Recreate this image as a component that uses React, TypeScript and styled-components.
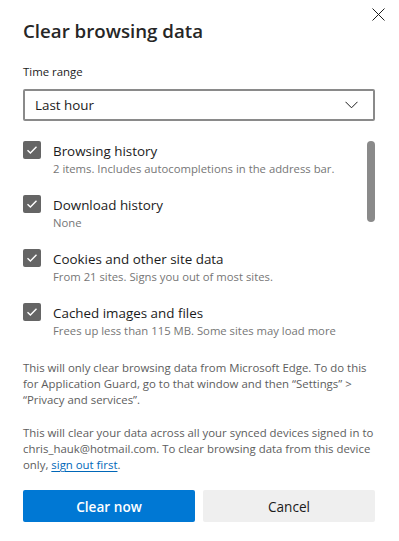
import { Fragment } from "react"
import styled, { createGlobalStyle } from "styled-components"

const GlobalStyle = createGlobalStyle`
    html, body {
        margin: 0;
        padding: 0;
        background: #ffffff;
    }

    body {
        font-family: "Open Sans", "Noto Sans", sans-serif;
        color: #1b1b1b;
    }
`

const Dialog = styled('div')`
    position: relative;
    width: 399px;
    height: 541px;
    box-sizing: border-box;
    padding: 17px 24px 0 23px;
    display: flex;
    flex-direction: column;
    background: #ffffff;
`

const CloseButton = styled('button')`
    position: absolute;
    top: 6px;
    right: 13px;
    width: 16px;
    height: 16px;
    padding: 0;
    border: none;
    background: transparent;
    display: flex;
    align-items: center;
    justify-content: center;
`

const Title = styled('h1')`
    margin: 0;
    font-size: 18.7px;
    line-height: 28px;
    font-weight: 600;
    color: #262626;
`

const FieldLabel = styled('label')`
    margin-top: 19px;
    font-size: 11.4px;
    line-height: 16px;
    color: #1b1b1b;
`

const Select = styled('div')`
    margin-top: 9px;
    height: 32px;
    box-sizing: border-box;
    border: 2px solid #8a8a8a;
    border-radius: 2px;
    display: flex;
    align-items: center;
    justify-content: space-between;
    padding: 0 15px 0 10px;
    font-size: 13.4px;
    color: #1b1b1b;
`

const ListArea = styled('div')`
    display: flex;
    margin-top: 10px;
    height: 213px;
    overflow: hidden;
`

const Items = styled('div')`
    flex: 1;
    display: flex;
    flex-direction: column;
    gap: 18px;
    padding-top: 10px;
`

const Track = styled('div')`
    width: 8px;
    padding-top: 10px;
`

const Thumb = styled('div')`
    width: 8px;
    height: 81px;
    border-radius: 4px;
    background: #8a8a8a;
`

const Item = styled('div')`
    display: flex;
    align-items: flex-start;
    gap: 12px;
`

const Box = styled('span')`
    flex: none;
    width: 18px;
    height: 18px;
    border-radius: 2px;
    background: #656565;
    display: flex;
    align-items: center;
    justify-content: center;
`

const ItemText = styled('div')`
    display: flex;
    flex-direction: column;
`

const ItemLabel = styled('span')`
    font-size: 13.4px;
    line-height: 20px;
    color: #1b1b1b;
`

const ItemNote = styled('span')`
    font-size: 11.3px;
    line-height: 16px;
    color: #767676;
    white-space: nowrap;
`

const Note = styled('p')<{ $top: number }>`
    margin: ${p => p.$top}px 0 0;
    font-size: 11.4px;
    line-height: 16px;
    color: #5d5d5d;
`

const Link = styled('a')`
    color: #0067b8;
    text-decoration: underline;
    text-underline-offset: 2px;
`

const Actions = styled('div')`
    margin-top: 17px;
    display: grid;
    grid-template-columns: 1fr 1fr;
    gap: 8px;
`

const Button = styled('button')<{ $primary?: boolean }>`
    height: 32px;
    border: none;
    border-radius: 2px;
    font-family: inherit;
    font-size: 13.6px;
    font-weight: ${p => p.$primary ? 600 : 400};
    background: ${p => p.$primary ? '#0078d4' : '#efefef'};
    color: ${p => p.$primary ? '#ffffff' : '#1b1b1b'};
`

const items = [
    { label: "Browsing history", note: "2 items. Includes autocompletions in the address bar." },
    { label: "Download history", note: "None" },
    { label: "Cookies and other site data", note: "From 21 sites. Signs you out of most sites." },
    { label: "Cached images and files", note: "Frees up less than 115 MB. Some sites may load more" },
]

const App = (): JSX.Element => {
    return (
        <Fragment>
            <GlobalStyle />
            <Dialog>
                <CloseButton aria-label="Close">
                    <svg width="13" height="13" viewBox="0 0 13 13">
                        <path d="M0.5 0.5 L12.5 12.5 M12.5 0.5 L0.5 12.5" stroke="#1b1b1b" strokeWidth="1" />
                    </svg>
                </CloseButton>

                <Title>Clear browsing data</Title>

                <FieldLabel>Time range</FieldLabel>
                <Select>
                    <span>Last hour</span>
                    <svg width="13" height="8" viewBox="0 0 13 8">
                        <path d="M0.5 0.8 L6.5 6.8 L12.5 0.8" fill="none" stroke="#1b1b1b" strokeWidth="1" />
                    </svg>
                </Select>

                <ListArea>
                    <Items>
                        {items.map((v, i) => (
                            <Item key={i}>
                                <Box>
                                    <svg width="12" height="10" viewBox="0 0 12 10">
                                        <path d="M1.5 5.2 L4.4 8 L10.5 1.8" fill="none" stroke="#ffffff" strokeWidth="1.4" />
                                    </svg>
                                </Box>
                                <ItemText>
                                    <ItemLabel>{v.label}</ItemLabel>
                                    <ItemNote>{v.note}</ItemNote>
                                </ItemText>
                            </Item>
                        ))}
                    </Items>
                    <Track>
                        <Thumb />
                    </Track>
                </ListArea>

                <Note $top={16}>
                    This will only clear browsing data from Microsoft Edge. To do this for Application Guard, go to that window and then “Settings” &gt; “Privacy and services”.
                </Note>
                <Note $top={17}>
                    This will clear your data across all your synced devices signed in to chris_hauk@hotmail.com. To clear browsing data from this device only, <Link href="#">sign out first</Link>.
                </Note>

                <Actions>
                    <Button $primary>Clear now</Button>
                    <Button>Cancel</Button>
                </Actions>
            </Dialog>
        </Fragment>
    )
}

export default App
